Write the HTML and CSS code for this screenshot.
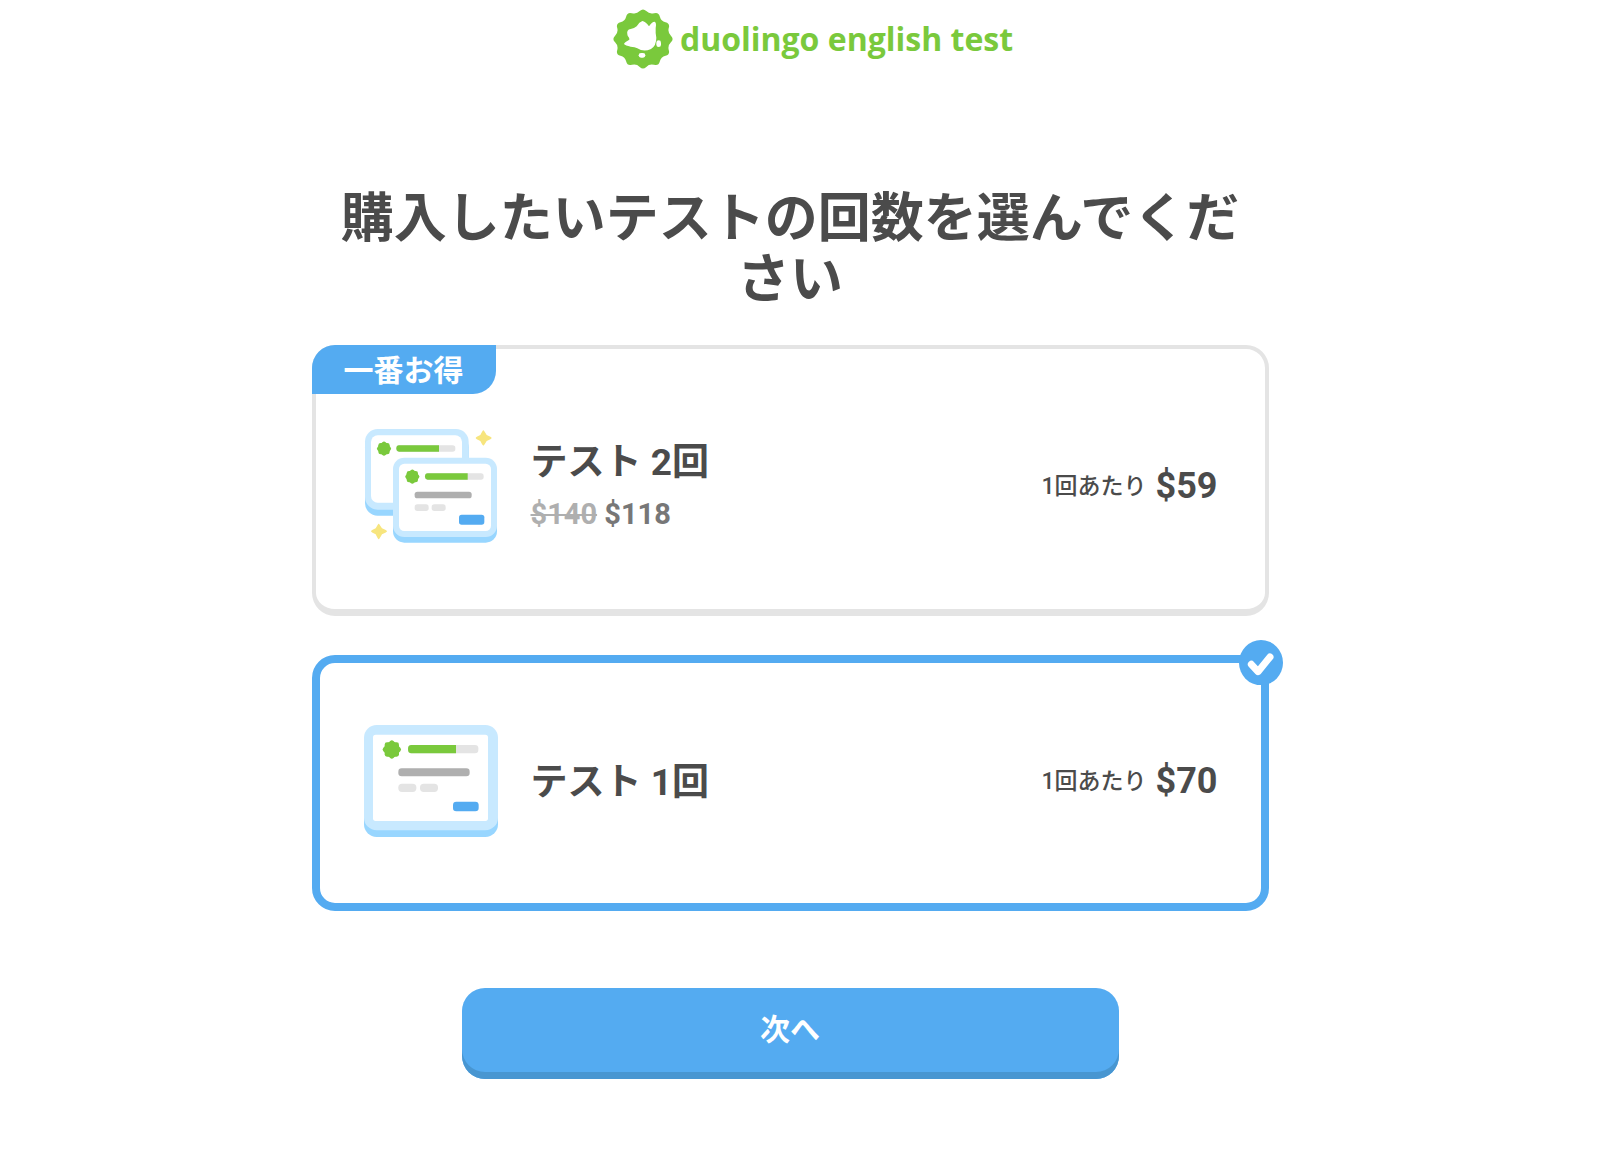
FILE: index.html
```html
<!DOCTYPE html>
<html lang="ja">
	<head>
		<meta charset="UTF-8" />
		<meta name="viewport" content="width=device-width, initial-scale=1" />
		<title>Duolingo English Test</title>
		<link rel="stylesheet" href="styles.css">
	</head>
	<body>
		<header class="header">
			<a class="logo" href="#">
				<svg class="logo-seal" viewBox="0 0 180 180" aria-hidden="true">
					<path fill="#7ac93c" d="M80.2 6.3Q90 -4 99.8 6.3Q109.7 16.6 123.3 12.6Q137 8.6 140.4 22.4Q143.7 36.3 157.6 39.6Q171.4 43 167.4 56.6Q163.4 70.3 173.7 80.2Q184 90 173.7 99.8Q163.4 109.7 167.4 123.4Q171.4 137 157.6 140.4Q143.7 143.7 140.4 157.6Q137 171.4 123.3 167.4Q109.7 163.4 99.8 173.7Q90 184 80.2 173.7Q70.3 163.4 56.7 167.4Q43 171.4 39.6 157.6Q36.3 143.7 22.4 140.4Q8.6 137 12.6 123.4Q16.6 109.7 6.3 99.8Q-4 90 6.3 80.2Q16.6 70.3 12.6 56.6Q8.6 43 22.4 39.6Q36.3 36.3 39.6 22.4Q43 8.6 56.7 12.6Q70.3 16.6 80.2 6.3Z" />
					<path fill="#fff" d="M43 76Q40 62 53 60Q64 59 71 52Q79 39 88 36Q97 37 108 52Q116 38 125 38Q131 40 128 57Q127 70 130 86Q130 110 114 120Q92 130 73 118Q66 113 53 113Q37 110 33 105Q35 99 49 92Q51 88 44 80Z" />
					<rect fill="#fff" x="130" y="94" width="14" height="20" rx="7" />
					<rect fill="#fff" x="77" y="132" width="20" height="14" rx="7" />
				</svg>
				<span>duolingo english test</span>
			</a>
		</header>

		<main class="page">
			<h1>購入したいテストの回数を選んでください</h1>

			<form class="plans" id="planForm">
				<label class="plan">
					<input type="radio" name="plan" value="2" />
					<span class="ribbon">一番お得</span>
					<svg class="plan-icon" viewBox="192 283 402 342" aria-hidden="true">
						<rect x="195" y="300" width="311" height="243" rx="38" fill="#98d6ff" />
						<rect x="195" y="283" width="311" height="242" rx="38" fill="#c8e9ff" />
						<rect x="213" y="302" width="273" height="202" rx="20" fill="#fff" />
						<g fill="#7ac93c">
							<rect x="235" y="325" width="34" height="34" rx="7" />
							<rect x="235" y="325" width="34" height="34" rx="7" transform="rotate(45 252 342)" />
						</g>
						<rect x="289" y="332" width="177" height="19" rx="8" fill="#e4e4e4" />
						<path d="M297 332H417V351H297Q289 351 289 341Q289 332 297 332Z" fill="#7ac93c" />
						<rect x="279" y="386" width="312" height="238" rx="34" fill="#98d6ff" />
						<rect x="279" y="369" width="312" height="238" rx="34" fill="#c8e9ff" />
						<rect x="297" y="387" width="276" height="202" rx="16" fill="#fff" />
						<g fill="#7ac93c">
							<rect x="320" y="409" width="34" height="34" rx="7" />
							<rect x="320" y="409" width="34" height="34" rx="7" transform="rotate(45 337 426)" />
						</g>
						<rect x="375" y="416" width="176" height="19" rx="8" fill="#e4e4e4" />
						<path d="M383 416H503V435H383Q375 435 375 425Q375 416 383 416Z" fill="#7ac93c" />
						<rect x="344" y="471" width="171" height="20" rx="8" fill="#afafaf" />
						<rect x="344" y="509" width="42" height="20" rx="8" fill="#e4e4e4" />
						<rect x="395" y="509" width="42" height="20" rx="8" fill="#e4e4e4" />
						<rect x="477" y="540" width="76" height="30" rx="8" fill="#54abf1" />
						<path d="M550 287Q552 287 560 301Q575 307 575 310Q575 313 560 319Q552 333 550 333Q548 333 541 319Q527 313 527 310Q527 307 541 301Q548 287 550 287Z" fill="#f7e57e" />
						<path d="M236 567Q238 567 246 581Q261 587 261 590Q261 593 246 599Q238 614 236 614Q234 614 227 599Q213 593 213 590Q213 587 227 581Q234 567 236 567Z" fill="#f7e57e" />
					</svg>
					<span class="plan-text">
						<span class="plan-title">テスト 2回</span>
						<span class="plan-total"><s>$140</s> $118</span>
					</span>
					<span class="plan-price">
						<span class="per-test">1回あたり</span>
						<span class="amount">$59</span>
					</span>
				</label>

				<label class="plan">
					<input type="radio" name="plan" value="1" checked />
					<svg class="plan-icon" viewBox="192 240 402 336" aria-hidden="true">
						<rect x="192" y="260" width="402" height="316" rx="38" fill="#98d6ff" />
						<rect x="192" y="240" width="402" height="316" rx="38" fill="#c8e9ff" />
						<rect x="219" y="269" width="345" height="259" rx="8" fill="#fff" />
						<g fill="#7ac93c">
							<rect x="254" y="292" width="43" height="43" rx="7" />
							<rect x="254" y="292" width="43" height="43" rx="7" transform="rotate(45 275.5 313.5)" />
						</g>
						<rect x="324" y="300" width="211" height="25" rx="10" fill="#e4e4e4" />
						<path d="M334 300H468V325H334Q324 325 324 312Q324 300 334 300Z" fill="#7ac93c" />
						<rect x="295" y="370" width="214" height="24" rx="10" fill="#afafaf" />
						<rect x="295" y="416" width="54" height="25" rx="11" fill="#e4e4e4" />
						<rect x="360" y="416" width="54" height="25" rx="11" fill="#e4e4e4" />
						<rect x="459" y="470" width="77" height="29" rx="10" fill="#54abf1" />
					</svg>
					<span class="plan-text">
						<span class="plan-title">テスト 1回</span>
					</span>
					<span class="plan-price">
						<span class="per-test">1回あたり</span>
						<span class="amount">$70</span>
					</span>
					<svg class="plan-check" viewBox="0 0 132 136" aria-hidden="true">
						<ellipse cx="66" cy="68" rx="66" ry="68" fill="#54abf1" />
						<path d="M37 73L57 95L93 51" fill="none" stroke="#fff" stroke-width="21" stroke-linecap="round" stroke-linejoin="round" />
					</svg>
				</label>
			</form>

			<button class="next" type="submit" form="planForm">次へ</button>
		</main>
	</body>
</html>
```
FILE: styles.css
```css
* {
	box-sizing: border-box;
}
body {
	margin: 0;
	background: #fff;
	color: #4b4b4b;
	font-family: Roboto, "Noto Sans CJK JP", sans-serif;
	font-weight: 700;
}
.header {
	display: flex;
	justify-content: center;
	padding: 9px 0 0 26px;
}
.logo {
	display: flex;
	align-items: center;
	gap: 7px;
	color: #7ac93c;
	font-family: "Open Sans", sans-serif;
	font-size: 32px;
	line-height: 60px;
	text-decoration: none;
}
.logo-seal {
	width: 60px;
	height: 60px;
}
.page {
	display: flex;
	flex-direction: column;
	align-items: center;
	padding: 120px 20px 40px 0;
}
h1 {
	max-width: 940px;
	margin: 0;
	font-size: 53px;
	font-weight: 700;
	line-height: 61px;
	text-align: center;
}
.plans {
	display: flex;
	flex-direction: column;
	gap: 39px;
	width: 100%;
	max-width: 957px;
	margin-top: 34px;
}
.plan {
	position: relative;
	display: flex;
	align-items: center;
	gap: 33px;
	padding: 80px 47px 66px 48px;
	border: 4px solid #e4e4e4;
	border-bottom-width: 7px;
	border-radius: 23px;
	cursor: pointer;
}
.plan:has(input:checked) {
	padding: 62px 43px 66px 44px;
	border: 8px solid #54abf1;
}
.plan input {
	position: absolute;
	opacity: 0;
}
.plan-icon {
	flex: none;
	width: 134px;
}
.plan-text {
	display: flex;
	flex: 1;
	flex-direction: column;
	padding-top: 3px;
}
.plan-title {
	font-size: 37px;
	line-height: 52px;
}
.plan-total {
	color: #777;
	font-size: 29px;
	line-height: 50px;
}
.plan-total s {
	color: #afafaf;
}
.plan-price {
	display: flex;
	align-items: center;
	gap: 9px;
}
.per-test {
	padding-bottom: 5px;
	font-size: 23px;
	font-weight: 500;
}
.amount {
	font-size: 36px;
}
.ribbon {
	position: absolute;
	top: -4px;
	left: -4px;
	padding: 2px 32px 0;
	border-radius: 23px 0;
	background: #54abf1;
	color: #fff;
	font-size: 30px;
	line-height: 47px;
}
.plan-check {
	position: absolute;
	top: -23px;
	right: -22px;
	width: 44px;
}
.next {
	width: 100%;
	max-width: 657px;
	margin-top: 77px;
	padding: 0 20px 7px;
	border: 0;
	border-radius: 23px;
	background: #54abf1;
	box-shadow: inset 0 -7px #4896d1;
	color: #fff;
	font: inherit;
	font-size: 30px;
	line-height: 84px;
	cursor: pointer;
}
```
